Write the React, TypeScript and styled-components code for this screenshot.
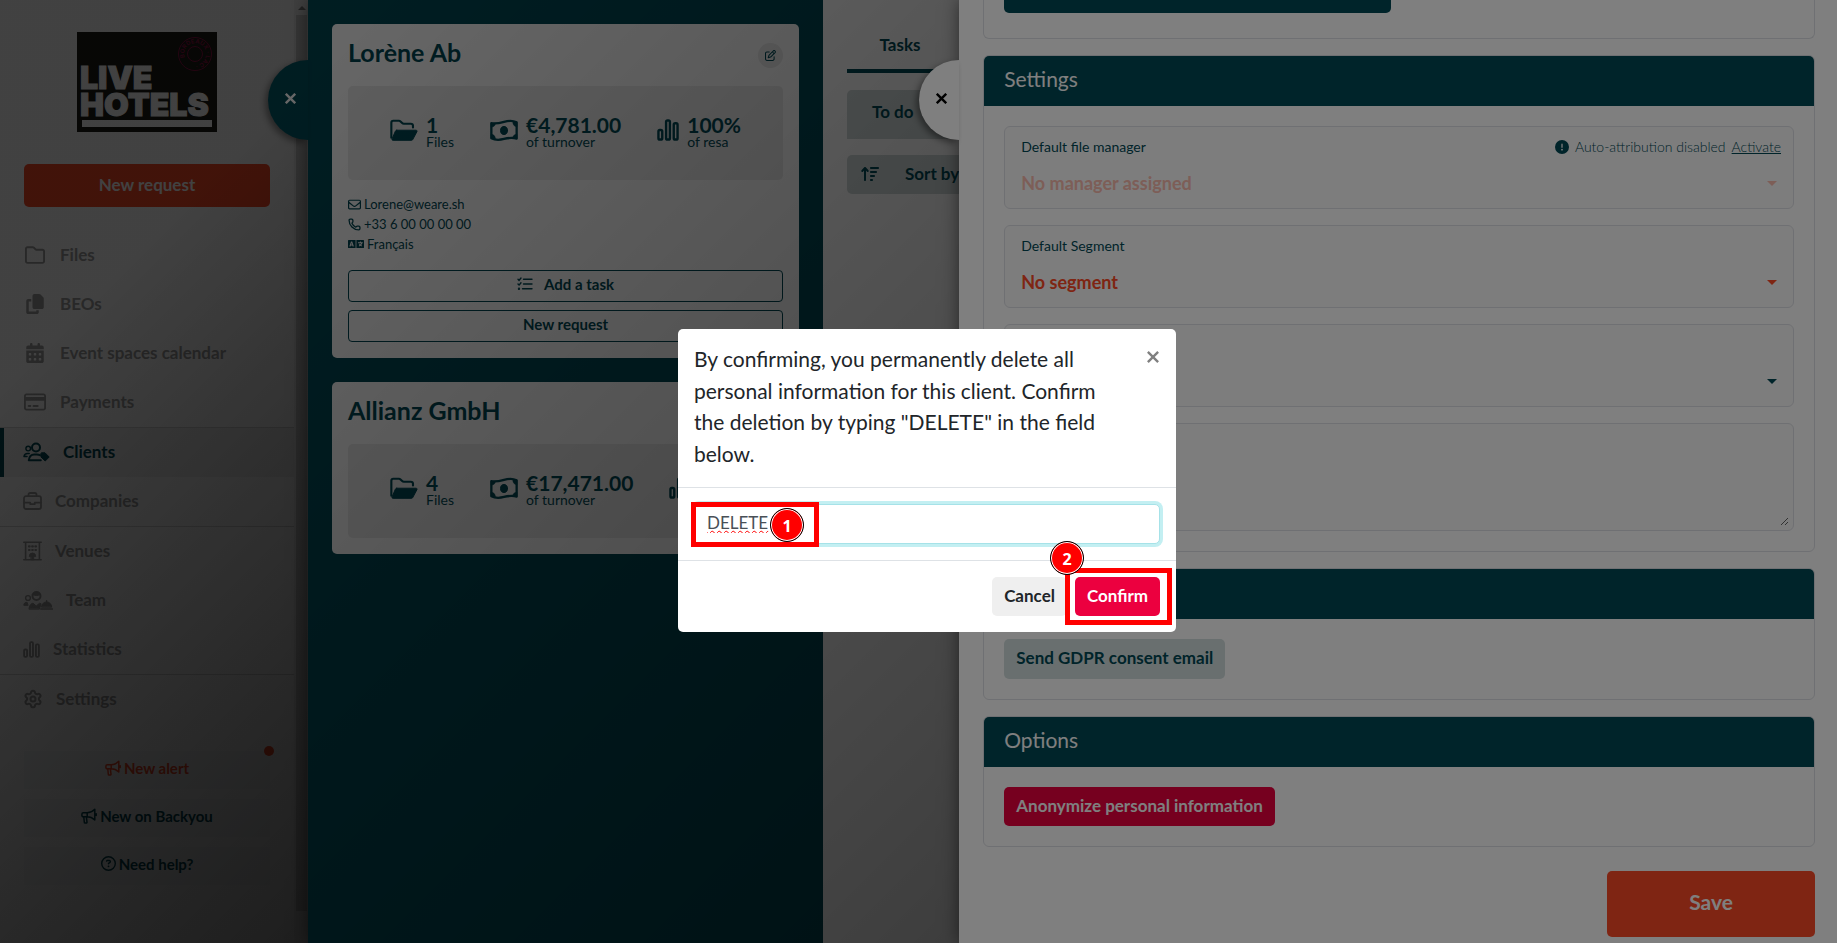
import React from "react";
import styled, { createGlobalStyle, css } from "styled-components";
import {
  FaRegFolder,
  FaCopy,
  FaCalendarDays,
  FaRegCreditCard,
  FaRegEnvelope,
  FaRegCircleQuestion,
  FaRegPenToSquare,
  FaArrowUpWideShort,
  FaCircleExclamation,
} from "react-icons/fa6";
import { FaLanguage } from "react-icons/fa";
import { Phone, Settings } from "lucide-react";

const tealDark = "#014854";
const orange = "#fe4a26";
const crimson = "#ec003f";
const line = "#dfe1e6";

const GlobalStyle = createGlobalStyle`
  *, *::before, *::after { box-sizing: border-box; }
  html, body, #root { height: 100%; }
  body {
    margin: 0;
    overflow: hidden;
    background: #fff;
    color: ${tealDark};
    font: 400 17px/24px Lato, "Liberation Sans", sans-serif;
  }
  button, input, select, textarea { font: inherit; color: inherit; }
  button { cursor: pointer; }
  h1, h2, p, ul { margin: 0; padding: 0; }
  ul { list-style: none; }
`;

const Page = styled.div`
  position: relative;
  height: 100%;
  overflow: hidden;
`;

/* ---------- icons ---------- */

const Glyph = styled.svg`
  display: block;
  flex: none;
  fill: none;
  stroke: currentColor;
  stroke-linecap: round;
  stroke-linejoin: round;
`;

const PeopleTagIcon = () => (
  <Glyph width="27" height="20" viewBox="0 0 27 20" strokeWidth="2">
    <circle cx="13" cy="5.5" r="4" />
    <circle cx="5.2" cy="6.6" r="2.3" strokeWidth="1.4" />
    <path d="M17 13.2c-1-.6-2-.8-3.2-.8h-2.600c-3 0-5 2-5.400 5.900h12" />
    <path d="M1 14.600c.3-2 1.600-3 3.600-3h1.600M1 14.600h3" strokeWidth="1.5" />
    <path d="M18 11.500v3.500l4.200 4 4-4-4.200-4.200h-3.300z" fill="currentColor" strokeWidth="1" />
  </Glyph>
);

const BriefcaseIcon = () => (
  <Glyph width="19" height="18" viewBox="0 0 19 18" strokeWidth="1.8">
    <rect x="1" y="4.2" width="17" height="12.8" rx="2" />
    <path d="M5.500 4V2.600C5.500 1.700 6.200 1 7.100 1h4.800c.9 0 1.600.7 1.600 1.600V4M1 10.600h6.200M11.800 10.600H18M7.300 10.800v1.400h4.400v-1.400" />
  </Glyph>
);

const HotelIcon = () => (
  <Glyph width="19" height="20" viewBox="0 0 19 20" strokeWidth="1.6">
    <path d="M.8 1.200h17.400M.8 18.800h17.400M2.600 1.200v17.600M16.400 1.200v17.600" />
    <path d="M6 5.400h.6M9.200 5.400h.6M12.400 5.400h.6M6 9h.6M9.200 9h.6M12.400 9h.6" strokeWidth="2.2" />
    <path d="M6.300 15.200a3.200 3.200 0 0 1 6.400 0zM8.300 15.500h2.400v3.300H8.300z" fill="currentColor" strokeWidth="1" />
  </Glyph>
);

const TeamIcon = () => (
  <Glyph width="30" height="20" viewBox="0 0 30 20" strokeWidth="2">
    <circle cx="13.5" cy="6" r="4" />
    <path d="M9.500 4.500c1-2.500 6-3.500 8 0-3 1.400-5 1.400-8 0z" fill="currentColor" strokeWidth="1" />
    <circle cx="5" cy="8" r="2.4" strokeWidth="1.4" />
    <path d="M.8 15c0-2 1.700-3 3.400-2.600L5 15zM6 18.800c.2-3.200 1.800-5.300 4-5.600l3.200 2.800 3.400-2.800 1.500.6-1.600 5z" fill="currentColor" strokeWidth="1" />
    <path d="M18.500 16.800c.3-3 2.400-4.800 5.100-4.800s4.800 1.800 5.100 4.800z" fill="currentColor" strokeWidth="1" />
    <path d="M17.800 18.900h11.600M23.600 10.800v.6" strokeWidth="1.5" />
  </Glyph>
);

const BarsIcon = ({ size = 17 }: { size?: number }) => (
  <Glyph width={size} height={size} viewBox="0 0 23 23" strokeWidth="2.5">
    <rect x="1.5" y="11.5" width="4" height="10" rx="1.5" />
    <rect x="9.5" y="1.5" width="4" height="20" rx="1.5" />
    <rect x="17.5" y="4.5" width="4" height="17" rx="1.5" />
  </Glyph>
);

const FolderOpenIcon = () => (
  <Glyph width="28" height="23" viewBox="0 0 29 23" strokeWidth="2.2">
    <path d="M1.400 19V3.400c0-1.100.9-2 2-2h5.800c.7 0 1.200.2 1.700.7l1.700 1.700c.5.5 1 .7 1.700.7h7.200c1.300 0 2.300.9 2.300 2.200v1.600" />
    <path d="M7 11.200h20c.9 0 1.300.8.9 1.500l-4.300 8.100c-.3.600-.8.900-1.500.9H3.200c-1 0-1.500-.9-1-1.700l3.400-7.900c.3-.600.8-.900 1.400-.9z" fill="currentColor" strokeWidth="1" />
  </Glyph>
);

const BanknoteIcon = () => (
  <Glyph width="28" height="23" viewBox="0 0 29 23" strokeWidth="2.4">
    <path d="M1.400 4v15.600c3.600 1.800 8 2 13.100.7 5-1.300 9.200-1.400 13.100-.5V3C24 1.200 19.800 1.100 14.500 2.500 9.500 4 5.300 4.600 1.400 4z" />
    <ellipse cx="14.5" cy="11.5" rx="3.6" ry="4.2" fill="currentColor" strokeWidth="1" />
    <path d="M1.400 4h4.200c0 2.300-1.600 4-4.200 4zM1.400 15.500c2.500 0 4.200 2 4.200 4.600l-4.200-.5zM27.600 7.500c-2.500 0-4-2-4-5l4 .5zM27.600 19.800h-4.200c0-2.600 1.700-4.300 4.200-4.300z" fill="currentColor" strokeWidth=".5" />
  </Glyph>
);

const ChecklistIcon = () => (
  <Glyph width="16" height="14" viewBox="0 0 16 14" strokeWidth="1.4">
    <path d="M6.500 2.300H15M6.500 7H15M5.500 11.800H15M1 2.300l1.100 1.100L4 1M1 7l1.100 1.100L4 5.700" />
    <circle cx="2" cy="11.8" r=".5" />
  </Glyph>
);

const MegaphoneIcon = () => (
  <Glyph width="16" height="16" viewBox="0 0 16 16" strokeWidth="1.5">
    <path d="M2.300 4.800h3.900c3 0 5.500-1.500 7.600-3.600v10.800c-2.100-2-4.600-3.200-7.600-3.200H2.300c-.8 0-1.400-.6-1.400-1.400V6.200c0-.8.600-1.400 1.400-1.400zM6.200 4.800v4M2.800 9l.5 5.200c0 .5.300.8.800.8h1.100c.6 0 .9-.4.8-.9l-.6-5M15.200 5.800v1.600" />
  </Glyph>
);

const Cross = styled(Glyph)`
  stroke-linecap: butt;
`;

const CrossIcon = ({ size = 11, weight = 2.4 }: { size?: number; weight?: number }) => (
  <Cross width={size} height={size} viewBox="0 0 11 11" strokeWidth={weight}>
    <path d="M.8.800l9.400 9.400M10.200.800L.8 10.200" />
  </Cross>
);

/* ---------- sidebar ---------- */

const Sidebar = styled.aside`
  display: flex;
  width: 308px;
  height: 100%;
  background: #fff;
`;

const SidebarBody = styled.div`
  flex: 1;
  display: flex;
  flex-direction: column;
  align-items: stretch;
  padding-top: 32px;
`;

const Logo = styled.svg`
  display: block;
  align-self: center;
  flex: none;
`;

const NewRequest = styled.button`
  height: 43px;
  margin: 32px 24px 24px;
  padding-bottom: 3px;
  border: 0;
  border-radius: 5px;
  background: ${orange};
  color: #fff;
  font-weight: 700;
`;

const NavItem = styled.li<{ $ruled?: boolean }>`
  ${(p) => p.$ruled && css`border-top: 1px solid #d5d5d5;`}
`;

const NavLink = styled.a<{ $active?: boolean }>`
  display: flex;
  align-items: center;
  gap: 13px;
  height: 49px;
  padding: 0 0 1px 23px;
  color: #9c9c9c;
  font-weight: 700;
  text-decoration: none;
  ${(p) =>
    p.$active &&
    css`
      padding-left: 19px;
      border-left: 4px solid ${tealDark};
      background: rgba(0, 0, 0, 0.06);
      color: ${tealDark};
    `}
`;

const IconSlot = styled.span<{ $wide?: boolean }>`
  display: flex;
  justify-content: center;
  ${(p) => p.$wide && css`width: 24px;`}
`;

const SupportLinks = styled.div`
  display: flex;
  flex-direction: column;
  gap: 10px;
  margin: 27px 24px 0;
`;

const SupportButton = styled.button<{ $alert?: boolean }>`
  position: relative;
  display: flex;
  align-items: center;
  justify-content: center;
  gap: 3px;
  height: 38px;
  padding: 0 0 5px;
  border: 0;
  background: rgba(2, 72, 84, 0.03);
  color: ${(p) => (p.$alert ? orange : tealDark)};
  font-size: 15px;
  font-weight: 700;
`;

const AlertDot = styled.span`
  position: absolute;
  top: -5px;
  right: -4px;
  width: 10px;
  height: 10px;
  border-radius: 50%;
  background: ${orange};
`;

const Scrollbar = styled.div`
  display: flex;
  flex-direction: column;
  align-items: center;
  width: 14px;
  padding: 0 1px 32px 2px;
  background: #f4f4f4;
`;

const ScrollArrow = styled.span`
  margin: 6px 0 5px;
  border: 4px solid transparent;
  border-top: 0;
  border-bottom-color: #808080;
`;

const ScrollThumb = styled.span`
  flex: 1;
  width: 11px;
  background: #cdcdcd;
`;

/* ---------- layers ---------- */

const shade = "linear-gradient(135deg, rgba(0,0,0,.2) 14%, rgba(0,0,0,.7) 100%)";

const Shade = styled.div<{ $double?: boolean }>`
  position: absolute;
  inset: 0;
  background: ${(p) => (p.$double ? `${shade}, ${shade}` : shade)};
`;

const Drawer = styled.section`
  position: absolute;
  top: 0;
  right: 0;
  bottom: 0;
  display: flex;
  box-shadow: 0 0 16px rgba(0, 0, 0, 0.5);
`;

const ClientDrawer = styled(Drawer)`
  left: 308px;
  background: #fff;
`;

const EditDrawer = styled(Drawer)`
  width: calc(48% - 4px);
  background: #fff;
`;

const DrawerTab = styled.button<{ $dark?: boolean }>`
  position: absolute;
  top: 60px;
  left: -40px;
  display: flex;
  align-items: center;
  width: 40px;
  height: 80px;
  padding: 0 0 3px 17px;
  border: 0;
  border-radius: 40px 0 0 40px;
  background: ${(p) => (p.$dark ? tealDark : "#fff")};
  color: ${(p) => (p.$dark ? "#fff" : "#000")};
  box-shadow: -3px 3px 6px rgba(0, 0, 0, 0.4);
`;

/* ---------- client column ---------- */

const ClientColumn = styled.div`
  display: flex;
  flex-direction: column;
  flex: 0 0 515px;
  gap: 24px;
  padding: 24px;
  background: ${tealDark};
`;

const ClientCard = styled.article`
  padding: 16px;
  border-radius: 5px;
  background: #fff;
`;

const CardTitleRow = styled.div`
  display: flex;
  align-items: center;
  justify-content: space-between;
  height: 30px;
  margin-bottom: 16px;
`;

const CardTitle = styled.h2`
  padding-bottom: 6px;
  font-size: 25px;
  line-height: 28px;
  font-weight: 700;
`;

const RoundButton = styled.button`
  display: flex;
  align-items: center;
  justify-content: center;
  width: 25px;
  height: 25px;
  padding: 0;
  border: 0;
  border-radius: 50%;
  background: #ececec;
`;

const Stats = styled.div`
  display: flex;
  justify-content: center;
  gap: 36px;
  height: 94px;
  padding: 31px 0 0;
  border-radius: 5px;
  background: #ececec;
`;

const Stat = styled.div`
  display: flex;
  align-items: flex-start;
  gap: 8px;
  svg { margin-top: 2px; }
`;

const StatValue = styled.strong`
  display: block;
  font-size: 21px;
  line-height: 16px;
`;

const StatLabel = styled.span`
  display: block;
  font-size: 14px;
  line-height: 18px;
`;

const ContactList = styled.ul`
  margin: 14px 0 16px;
`;

const ContactItem = styled.li`
  display: flex;
  align-items: center;
  gap: 3px;
  height: 20px;
  font-size: 13px;
`;

const OutlineButton = styled.button`
  display: flex;
  align-items: center;
  justify-content: center;
  gap: 11px;
  width: 100%;
  height: 32px;
  padding: 0 0 4px;
  border: 1px solid ${tealDark};
  border-radius: 4px;
  background: transparent;
  font-size: 15px;
  font-weight: 700;
  & + & { margin-top: 8px; }
`;

/* ---------- tasks column ---------- */

const TaskColumn = styled.div`
  flex: 1;
  display: flex;
  flex-direction: column;
  align-items: stretch;
  padding: 17px 24px;
`;

const TabButton = styled.button`
  align-self: flex-start;
  height: 56px;
  width: 106px;
  padding-top: 4px;
  border: 0;
  border-bottom: 4px solid ${tealDark};
  background: none;
  font-weight: 700;
`;

const TodoButton = styled.button`
  height: 49px;
  margin: 17px 0 16px;
  padding: 0 25px 5px;
  border: 0;
  border-radius: 5px 5px 0 0;
  background: #cfd8d8;
  font-weight: 700;
  text-align: left;
`;

const SortButton = styled.button`
  display: flex;
  align-items: center;
  gap: 26px;
  height: 39px;
  padding: 0 14px 2px;
  border: 0;
  border-radius: 5px;
  background: #cfd8d8;
  font-weight: 700;
`;

/* ---------- edit drawer ---------- */

const EditBody = styled.div`
  flex: 1;
  display: flex;
  flex-direction: column;
  gap: 16px;
  padding: 0 22px 0 24px;
  overflow: hidden;
`;

const Panel = styled.section`
  flex: none;
  border: 1px solid ${line};
  border-radius: 6px;
  overflow: hidden;
`;

const PanelTail = styled(Panel)`
  height: 39px;
  padding: 0 20px;
  border-top: 0;
  border-radius: 0 0 6px 6px;
`;

const TailButton = styled.button`
  display: block;
  width: 49%;
  height: 13px;
  border: 0;
  border-radius: 0 0 5px 5px;
  background: ${tealDark};
`;

const PanelTitle = styled.h2`
  height: 50px;
  padding: 0 20px;
  background: ${tealDark};
  color: #fff;
  font-size: 21px;
  line-height: 46px;
  font-weight: 400;
`;

const PanelBody = styled.div`
  display: flex;
  flex-direction: column;
  align-items: flex-start;
  gap: 16px;
  padding: 20px;
`;

const Field = styled.div`
  display: flex;
  flex-direction: column;
  gap: 12px;
  width: 100%;
  height: 83px;
  padding: 8px 12px 0 16px;
  border: 1px solid ${line};
  border-radius: 6px;
  background: #fafafb;
`;

const FieldTop = styled.div`
  display: flex;
  justify-content: space-between;
  height: 24px;
  font-size: 14px;
`;

const Note = styled.span`
  display: flex;
  align-items: center;
  gap: 6px;
  font-weight: 300;
  a { color: inherit; }
`;

const SelectRow = styled.div<{ $tone: string }>`
  display: flex;
  align-items: center;
  padding-right: 4px;
  color: ${(p) => p.$tone};
  &::after {
    content: "";
    border: 5px solid transparent;
    border-top-color: currentColor;
    border-bottom: 0;
  }
`;

const Select = styled.select`
  flex: 1;
  height: 24px;
  padding: 0;
  border: 0;
  background: none;
  appearance: none;
  font-size: 18px;
  font-weight: 700;
  &:disabled { opacity: 1; }
`;

const Comment = styled.textarea`
  display: block;
  width: 100%;
  height: 108px;
  padding: 12px 17px;
  border: 5px solid #fafafb;
  border-radius: 6px;
  outline: 1px solid ${line};
  outline-offset: -1px;
  background: #fafafb;
  resize: vertical;
`;

const SolidButton = styled.button<{ $tone: "mist" | "danger" | "plain" }>`
  height: 39px;
  padding: 0 12px 2px;
  border: 0;
  border-radius: 5px;
  font-weight: 700;
  ${(p) => p.$tone === "mist" && css`height: 40px; background: #d3dfdf; color: ${tealDark};`}
  ${(p) => p.$tone === "danger" && css`background: ${crimson}; color: #fff;`}
  ${(p) => p.$tone === "plain" && css`background: #efefef; color: #212529;`}
`;

const SaveButton = styled.button`
  align-self: flex-end;
  flex: none;
  width: 25%;
  height: 66px;
  margin-top: 8px;
  padding-bottom: 6px;
  border: 0;
  border-radius: 5px;
  background: ${orange};
  color: #fff;
  font-size: 21px;
  font-weight: 700;
`;

/* ---------- confirmation dialog ---------- */

const Backdrop = styled.div`
  position: absolute;
  inset: 0;
  display: flex;
  align-items: flex-start;
  justify-content: center;
  padding: 329px 0 0 17px;
  background: rgba(0, 0, 0, 0.5);
`;

const Dialog = styled.div`
  position: relative;
  width: 498px;
  border-radius: 5px;
  background: #fff;
  color: #212529;
`;

const DialogHead = styled.div`
  display: flex;
  align-items: flex-start;
  justify-content: space-between;
  padding: 14px 16px 18px;
  border-bottom: 1px solid #dee2e6;
`;

const DialogText = styled.h1`
  width: 420px;
  font-size: 21px;
  line-height: 1.5;
  font-weight: 400;
`;

const CloseButton = styled.button`
  margin-top: 8px;
  padding: 0 1px;
  border: 0;
  background: none;
  color: #808080;
`;

const DialogBody = styled.div`
  padding: 16px;
`;

const ConfirmInput = styled.input`
  display: block;
  width: 100%;
  height: 40px;
  padding: 0 12px 4px;
  border: 1px solid #a6e2e8;
  border-radius: 5px;
  outline: 0;
  box-shadow: 0 0 0 3px #c3eff2;
  color: #495057;
  line-height: 34px;
  text-decoration: underline wavy #f00 1px;
  text-decoration-skip-ink: none;
`;

const DialogFoot = styled.div`
  display: flex;
  justify-content: flex-end;
  gap: 8px;
  padding: 16px;
  border-top: 1px solid #dee2e6;
`;

const Highlight = styled.span<{ $x: number; $y: number; $w: number; $h: number }>`
  position: absolute;
  left: ${(p) => p.$x}px;
  top: ${(p) => p.$y}px;
  width: ${(p) => p.$w}px;
  height: ${(p) => p.$h}px;
  border: 5px solid #f00;
  pointer-events: none;
`;

const StepBadge = styled.span<{ $x: number; $y: number }>`
  position: absolute;
  left: ${(p) => p.$x}px;
  top: ${(p) => p.$y}px;
  width: 34px;
  height: 34px;
  border: 1px solid #000;
  border-radius: 50%;
  box-shadow: inset 0 0 0 1px #fff;
  background: #f00;
  color: #fff;
  font: 700 16px/34px "Open Sans", sans-serif;
  text-align: center;
`;

/* ---------- data ---------- */

const mainNav = [
  { label: "Files", icon: <FaRegFolder size={20} />, wide: true },
  { label: "BEOs", icon: <FaCopy size={20} />, wide: true },
  { label: "Event spaces calendar", icon: <FaCalendarDays size={20} />, wide: true },
  { label: "Payments", icon: <FaRegCreditCard size={22} />, wide: true },
  { label: "Clients", icon: <PeopleTagIcon />, active: true, ruled: true },
  { label: "Companies", icon: <BriefcaseIcon /> },
  { label: "Venues", icon: <HotelIcon />, ruled: true },
  { label: "Team", icon: <TeamIcon /> },
  { label: "Statistics", icon: <BarsIcon /> },
  { label: "Settings", icon: <Settings size={20} strokeWidth={2.4} />, ruled: true },
];

const StatBlock = ({ icon, value, label }: { icon: React.ReactNode; value: string; label: string }) => (
  <Stat>
    {icon}
    <div>
      <StatValue>{value}</StatValue>
      <StatLabel>{label}</StatLabel>
    </div>
  </Stat>
);

const StatRow = ({ files, turnover, rate }: { files: string; turnover: string; rate: string }) => (
  <Stats>
    <StatBlock icon={<FolderOpenIcon />} value={files} label="Files" />
    <StatBlock icon={<BanknoteIcon />} value={turnover} label="of turnover" />
    <StatBlock icon={<BarsIcon size={22} />} value={rate} label="of resa" />
  </Stats>
);

const LogoMark = () => (
  <Logo width="140" height="100" viewBox="0 0 140 100" role="img" aria-label="Live Hotels Bordeaux-Lac">
    <rect width="140" height="100" fill="#1a1a16" />
    <g fill="#fff" stroke="#fff" strokeWidth="1" fontFamily="Inter, sans-serif" fontWeight="900" fontSize="32">
      <text x="3" y="57">LIVE</text>
      <text x="3" y="84">HOTELS</text>
    </g>
    <rect x="5" y="88" width="130" height="7" fill="#fff" />
    <g fill="none" stroke="#8a1040">
      <circle cx="118" cy="22" r="16.5" />
      <circle cx="118" cy="22" r="7.5" />
    </g>
    <path id="ring" d="M107.800 25.700A10.800 10.800 0 0 1 128.200 18.300A10.800 10.800 0 0 1 107.800 25.700" fill="none" />
    <text fill="#8a1040" fontFamily="Inter, sans-serif" fontWeight="700" fontSize="6">
      <textPath href="#ring">BORDEAUX · LAC ·</textPath>
    </text>
  </Logo>
);

export default function App() {
  return (
    <Page>
      <GlobalStyle />

      <Sidebar>
        <SidebarBody>
          <LogoMark />
          <NewRequest type="button">New request</NewRequest>
          <nav>
            <ul>
              {mainNav.map((item) => (
                <NavItem key={item.label} $ruled={item.ruled}>
                  <NavLink href="#" $active={item.active}>
                    <IconSlot $wide={item.wide}>{item.icon}</IconSlot>
                    {item.label}
                  </NavLink>
                </NavItem>
              ))}
            </ul>
          </nav>
          <SupportLinks>
            <SupportButton type="button" $alert>
              <MegaphoneIcon />
              New alert
              <AlertDot />
            </SupportButton>
            <SupportButton type="button">
              <MegaphoneIcon />
              New on Backyou
            </SupportButton>
            <SupportButton type="button">
              <FaRegCircleQuestion size={15} />
              Need help?
            </SupportButton>
          </SupportLinks>
        </SidebarBody>
        <Scrollbar>
          <ScrollArrow />
          <ScrollThumb />
        </Scrollbar>
      </Sidebar>

      <Shade $double />

      <ClientDrawer>
        <DrawerTab type="button" $dark aria-label="Close client">
          <CrossIcon />
        </DrawerTab>
        <ClientColumn>
          <ClientCard>
            <CardTitleRow>
              <CardTitle>Lorène Ab</CardTitle>
              <RoundButton type="button" aria-label="Edit">
                <FaRegPenToSquare size={11} />
              </RoundButton>
            </CardTitleRow>
            <StatRow files="1" turnover="€4,781.00" rate="100%" />
            <ContactList>
              <ContactItem>
                <FaRegEnvelope size={13} />
                Lorene@weare.sh
              </ContactItem>
              <ContactItem>
                <Phone size={13} strokeWidth={2.4} />
                +33 6 00 00 00 00
              </ContactItem>
              <ContactItem>
                <FaLanguage size={16} />
                Français
              </ContactItem>
            </ContactList>
            <OutlineButton type="button">
              <ChecklistIcon />
              Add a task
            </OutlineButton>
            <OutlineButton type="button">New request</OutlineButton>
          </ClientCard>
          <ClientCard>
            <CardTitleRow>
              <CardTitle>Allianz GmbH</CardTitle>
            </CardTitleRow>
            <StatRow files="4" turnover="€17,471.00" rate="75%" />
          </ClientCard>
        </ClientColumn>
        <TaskColumn>
          <TabButton type="button">Tasks</TabButton>
          <TodoButton type="button">To do</TodoButton>
          <SortButton type="button">
            <FaArrowUpWideShort size={18} />
            Sort by
          </SortButton>
        </TaskColumn>
      </ClientDrawer>

      <Shade />

      <EditDrawer>
        <DrawerTab type="button" aria-label="Close editor">
          <CrossIcon />
        </DrawerTab>
        <EditBody>
          <PanelTail>
            <TailButton type="button" aria-label="Add" />
          </PanelTail>
          <Panel>
            <PanelTitle>Settings</PanelTitle>
            <PanelBody>
              <Field>
                <FieldTop>
                  <label htmlFor="manager">Default file manager</label>
                  <Note>
                    <FaCircleExclamation size={14} color={tealDark} />
                    Auto-attribution disabled
                    <a href="#">Activate</a>
                  </Note>
                </FieldTop>
                <SelectRow $tone="#fbbcaf">
                  <Select id="manager" disabled>
                    <option>No manager assigned</option>
                  </Select>
                </SelectRow>
              </Field>
              <Field>
                <FieldTop>
                  <label htmlFor="segment">Default Segment</label>
                </FieldTop>
                <SelectRow $tone={orange}>
                  <Select id="segment">
                    <option>No segment</option>
                  </Select>
                </SelectRow>
              </Field>
              <Field>
                <FieldTop />
                <SelectRow $tone={tealDark}>
                  <Select aria-label="Language" />
                </SelectRow>
              </Field>
              <Comment aria-label="Comment" />
            </PanelBody>
          </Panel>
          <Panel>
            <PanelTitle />
            <PanelBody>
              <SolidButton type="button" $tone="mist">
                Send GDPR consent email
              </SolidButton>
            </PanelBody>
          </Panel>
          <Panel>
            <PanelTitle>Options</PanelTitle>
            <PanelBody>
              <SolidButton type="button" $tone="danger">
                Anonymize personal information
              </SolidButton>
            </PanelBody>
          </Panel>
          <SaveButton type="button">Save</SaveButton>
        </EditBody>
      </EditDrawer>

      <Backdrop>
        <Dialog role="dialog" aria-modal="true" aria-labelledby="confirm-text">
          <DialogHead>
            <DialogText id="confirm-text">
              By confirming, you permanently delete all personal information for this client. Confirm the deletion by
              typing "DELETE" in the field below.
            </DialogText>
            <CloseButton type="button" aria-label="Close">
              <CrossIcon size={12} weight={2.2} />
            </CloseButton>
          </DialogHead>
          <DialogBody>
            <ConfirmInput type="text" defaultValue="DELETE" aria-labelledby="confirm-text" />
          </DialogBody>
          <DialogFoot>
            <SolidButton type="button" $tone="plain">
              Cancel
            </SolidButton>
            <SolidButton type="button" $tone="danger">
              Confirm
            </SolidButton>
          </DialogFoot>
          <Highlight $x={13} $y={173} $w={128} $h={45} />
          <Highlight $x={387} $y={239} $w={107} $h={57} />
          <StepBadge $x={92} $y={179}>1</StepBadge>
          <StepBadge $x={372} $y={212}>2</StepBadge>
        </Dialog>
      </Backdrop>
    </Page>
  );
}
